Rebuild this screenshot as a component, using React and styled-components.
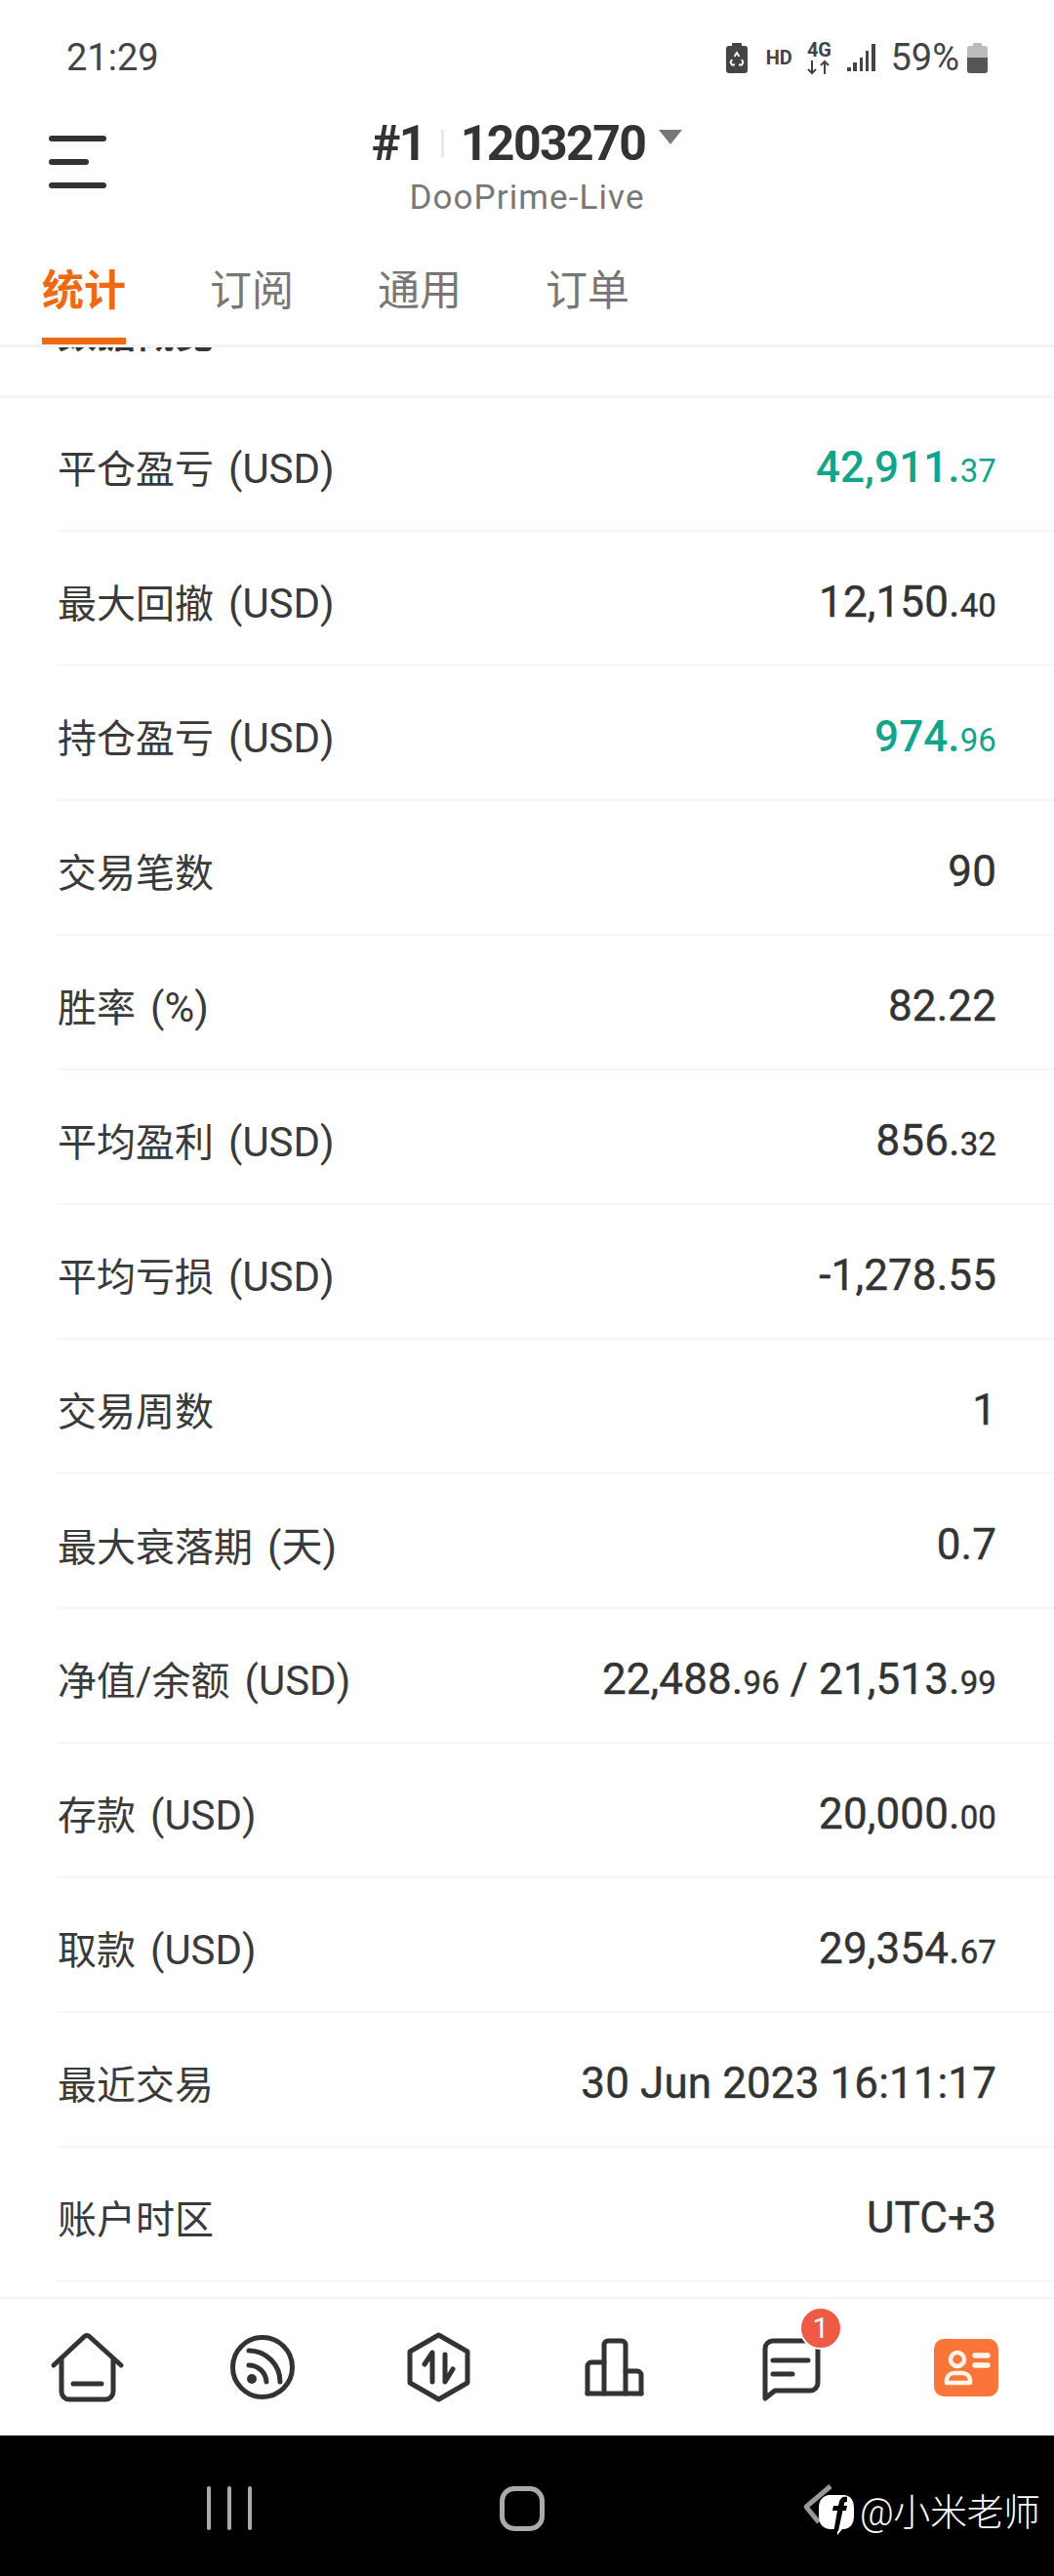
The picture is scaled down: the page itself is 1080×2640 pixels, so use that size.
import React from "react";
import styled, { createGlobalStyle } from "styled-components";

const Global = createGlobalStyle`
  html, body { margin: 0; padding: 0; background: #fff; }
  * { box-sizing: border-box; }
  body { font-family: Roboto, "Noto Sans CJK SC", sans-serif; }
`;

const Page = styled.div`
  width: 1080px;
  height: 2640px;
  display: flex;
  flex-direction: column;
  background: #fff;
  color: #333;
  overflow: hidden;
`;

const StatusBar = styled.div`
  height: 118px;
  flex: none;
  padding: 0 68px;
  display: flex;
  align-items: center;
  justify-content: space-between;
  color: #444;
`;
const Clock = styled.span`
  font-size: 38px;
  line-height: 1;
`;
const StatusGroup = styled.div`
  display: flex;
  align-items: center;
  height: 40px;
`;
const StatusTag = styled.span`
  font-size: 20px;
  font-weight: 700;
  line-height: 1;
  margin-left: ${(p) => p.$left || 0}px;
  letter-spacing: -0.2px;
`;
const NetStack = styled.div`
  display: flex;
  flex-direction: column;
  align-items: center;
  margin-left: 15px;
  width: 26px;
`;
const Percent = styled.span`
  font-size: 38px;
  line-height: 1;
  margin: 0 8px 0 15px;
`;
const StatusSvg = styled.svg`
  display: block;
  flex: none;
  margin-left: ${(p) => p.$left || 0}px;
`;

const TitleBar = styled.div`
  height: 132px;
  flex: none;
  display: grid;
  grid-template-columns: 1fr auto 1fr;
  padding: 0 50px;
`;
const Menu = styled.div`
  display: flex;
  flex-direction: column;
  gap: 18px;
  padding-top: 21px;
`;
const MenuLine = styled.span`
  display: block;
  height: 6px;
  width: ${(p) => p.$w}px;
  border-radius: 3px;
  background: #333;
`;
const TitleCol = styled.div`
  display: flex;
  flex-direction: column;
  align-items: center;
`;
const TitleRow = styled.div`
  display: flex;
  align-items: center;
  height: 58px;
  font-size: 50px;
  font-weight: 700;
  letter-spacing: -1.6px;
  color: #333;
`;
const TitleDivider = styled.span`
  width: 3px;
  height: 28px;
  background: #e8e8e8;
  margin: 0 17px 0 16px;
`;
const Caret = styled.span`
  width: 0;
  height: 0;
  border-left: 12px solid transparent;
  border-right: 12px solid transparent;
  border-top: 15px solid #777;
  margin: 0 0 14px 14px;
`;
const SubTitle = styled.div`
  font-size: 35px;
  line-height: 40px;
  margin-top: 7px;
  letter-spacing: 1.1px;
  color: #777;
`;

const Tabs = styled.div`
  height: 106px;
  flex: none;
  padding: 0 0 0 43px;
  display: flex;
  gap: 86px;
  border-bottom: 3px solid #f3f3f3;
  position: relative;
  z-index: 1;
  background: #fff;
`;
const Tab = styled.div`
  position: relative;
  height: 106px;
  font-size: 43px;
  line-height: 60px;
  padding-top: 18px;
  white-space: nowrap;
  font-weight: ${(p) => (p.$active ? 700 : 400)};
  color: ${(p) => (p.$active ? "#ee6a12" : "#777")};
  ${(p) =>
    p.$active &&
    `&::after{content:"";position:absolute;left:0;right:0;bottom:3px;height:7px;background:#ee6a12;}`}
`;

const Content = styled.div`
  flex: 1;
  min-height: 0;
  overflow: hidden;
`;
const SectionHead = styled.div`
  display: flow-root;
  height: 52px;
  border-bottom: 3px solid #f4f4f4;
  padding-left: 59px;
`;
const SectionTitle = styled.div`
  margin-top: -35px;
  font-size: 40px;
  line-height: 44px;
  font-weight: 700;
  color: #333;
`;
const RowList = styled.div`
  display: flex;
  flex-direction: column;
`;
const Row = styled.div`
  flex: none;
  height: 138px;
  margin-left: 59px;
  padding: 5px 59px 0 0;
  display: flex;
  align-items: center;
  justify-content: space-between;
  border-bottom: 2px solid #f5f5f5;
  &:first-child {
    height: 137px;
    padding-top: 4px;
  }
`;
const Label = styled.span`
  font-size: 40px;
  color: #3a3a3a;
`;
const Unit = styled.span`
  font-size: 42px;
  margin-left: 15px;
`;
const Value = styled.span`
  padding-top: 2px;
  font-size: 44px;
  font-weight: ${(p) => (p.$green ? 500 : 400)};
  letter-spacing: 0.1px;
  -webkit-text-stroke: ${(p) => (p.$green ? "0" : "0.4px")};
  color: ${(p) => (p.$green ? "#14a38b" : "#333")};
`;
const Cents = styled.span`
  font-size: 33px;
  font-weight: 400;
`;

const BottomNav = styled.nav`
  height: 142px;
  flex: none;
  display: grid;
  grid-template-columns: repeat(6, 1fr);
  align-items: center;
  justify-items: center;
  border-top: 2px solid #f3f3f3;
  background: #fff;
`;
const NavItem = styled.div`
  position: relative;
  width: 80px;
  height: 80px;
`;
const NavSvg = styled.svg`
  display: block;
  fill: none;
  stroke: #333;
  stroke-width: 5;
  stroke-linecap: round;
  stroke-linejoin: round;
`;
const Badge = styled.span`
  position: absolute;
  left: 49px;
  top: -22px;
  width: 44px;
  height: 44px;
  border-radius: 50%;
  border: 2px solid #fff;
  background: #ef5a45;
  color: #fff;
  font-size: 30px;
  line-height: 40px;
  text-align: center;
`;

const SystemBar = styled.div`
  position: relative;
  height: 144px;
  flex: none;
  background: #000;
  display: flex;
  align-items: flex-start;
  padding: 52px 0 0 212px;
`;
const Recents = styled.div`
  display: flex;
  gap: 17px;
`;
const RecentBar = styled.span`
  display: block;
  width: 4px;
  height: 45px;
  background: #aaa;
  border-radius: 2px;
`;
const HomeKey = styled.span`
  display: block;
  width: 46px;
  height: 46px;
  margin-left: 254px;
  border: 5px solid #aaa;
  border-radius: 15px;
`;
const Watermark = styled.div`
  position: absolute;
  left: 824px;
  top: 50px;
  display: flex;
  align-items: center;
`;
const WatermarkText = styled.span`
  position: absolute;
  left: 57px;
  top: 4px;
  white-space: nowrap;
  font-size: 38px;
  line-height: 50px;
  letter-spacing: -0.4px;
  color: #fff;
  font-weight: 300;
`;

const rows = [
  ["平仓盈亏", "(USD)", [["42,911.", "37"]], true],
  ["最大回撤", "(USD)", [["12,150.", "40"]]],
  ["持仓盈亏", "(USD)", [["974.", "96"]], true],
  ["交易笔数", "", [["90"]]],
  ["胜率", "(%)", [["82.22"]]],
  ["平均盈利", "(USD)", [["856.", "32"]]],
  ["平均亏损", "(USD)", [["-1,278.55"]]],
  ["交易周数", "", [["1"]]],
  ["最大衰落期", "(天)", [["0.7"]]],
  ["净值/余额", "(USD)", [["22,488.", "96"], [" / 21,513.", "99"]]],
  ["存款", "(USD)", [["20,000.", "00"]]],
  ["取款", "(USD)", [["29,354.", "67"]]],
  ["最近交易", "", [["30 Jun 2023 16:11:17"]]],
  ["账户时区", "", [["UTC+3"]]],
];

const Icon = ({ children }) => (
  <NavSvg width="80" height="80" viewBox="0 0 80 80">
    {children}
  </NavSvg>
);

export default function App() {
  return (
    <Page>
      <Global />
      <StatusBar>
        <Clock>21:29</Clock>
        <StatusGroup>
          <StatusSvg width="22" height="31" viewBox="0 0 22 31">
            <rect x="6" y="0" width="10" height="4" rx="1" fill="#444" />
            <rect x="0" y="3" width="22" height="28" rx="3" fill="#444" />
            <path d="M8.5 14L11 10l2.5 4M16 17l1.5 3-1.5 2.5h-3M9 22.5H6L4.5 20 6 17" fill="none" stroke="#fff" strokeWidth="1.8" />
          </StatusSvg>
          <StatusTag $left={19}>HD</StatusTag>
          <NetStack>
            <StatusTag>4G</StatusTag>
            <StatusSvg width="26" height="16" viewBox="0 0 26 16">
              <path d="M6 1v13M2 10l4 4 4-4M19 15V2M15 6l4-4 4 4" fill="none" stroke="#444" strokeWidth="2" />
            </StatusSvg>
          </NetStack>
          <StatusSvg $left={16} width="29" height="28" viewBox="0 0 29 28">
            <rect x="0" y="24" width="4" height="4" fill="#444" />
            <rect x="6" y="19" width="4" height="9" fill="#444" />
            <rect x="13" y="14" width="3" height="14" fill="#444" />
            <rect x="19" y="7" width="3" height="21" fill="#444" />
            <rect x="25" y="0" width="4" height="28" fill="#444" />
          </StatusSvg>
          <Percent>59%</Percent>
          <StatusSvg width="21" height="31" viewBox="0 0 21 31">
            <rect x="6" y="0" width="9" height="4" rx="1" fill="#bbb" />
            <path d="M3 3h15a3 3 0 0 1 3 3v10H0V6a3 3 0 0 1 3-3z" fill="#bbb" />
            <path d="M0 15h21v13a3 3 0 0 1-3 3H3a3 3 0 0 1-3-3z" fill="#555" />
          </StatusSvg>
        </StatusGroup>
      </StatusBar>

      <TitleBar>
        <Menu>
          <MenuLine $w={59} />
          <MenuLine $w={41} />
          <MenuLine $w={59} />
        </Menu>
        <TitleCol>
          <TitleRow>
            #1
            <TitleDivider />
            1203270
            <Caret />
          </TitleRow>
          <SubTitle>DooPrime-Live</SubTitle>
        </TitleCol>
        <span />
      </TitleBar>

      <Tabs>
        <Tab $active>统计</Tab>
        <Tab>订阅</Tab>
        <Tab>通用</Tab>
        <Tab>订单</Tab>
      </Tabs>

      <Content>
        <SectionHead>
          <SectionTitle>数据概览</SectionTitle>
        </SectionHead>
        <RowList>
          {rows.map(([label, unit, parts, green]) => (
            <Row key={label}>
              <Label>
                {label}
                {unit && <Unit>{unit}</Unit>}
              </Label>
              <Value $green={green}>
                {parts.map(([main, cents], i) => (
                  <React.Fragment key={i}>
                    {main}
                    {cents && <Cents>{cents}</Cents>}
                  </React.Fragment>
                ))}
              </Value>
            </Row>
          ))}
        </RowList>
      </Content>

      <BottomNav>
        <NavItem>
          <Icon>
            <path d="M5 38L36.5 8.5a3.5 3.5 0 0 1 5 0L74 38" />
            <path d="M13 32V65a8 8 0 0 0 8 8H58a8 8 0 0 0 8-8V32" />
            <path d="M25 57H54" />
          </Icon>
        </NavItem>
        <NavItem>
          <Icon>
            <circle cx="39" cy="40" r="30.5" />
            <path d="M25 23A32 32 0 0 1 57 55" />
            <path d="M25 38A18 18 0 0 1 43 55" />
            <circle cx="28" cy="52" r="5" fill="#333" stroke="none" />
          </Icon>
        </NavItem>
        <NavItem>
          <Icon>
            <path d="M39.5 7L69 24V56L39.5 73L10 56V24Z" />
            <path d="M33 55V25L25 37" />
            <path d="M46 27V55L54 42" />
          </Icon>
        </NavItem>
        <NavItem>
          <Icon>
            <path d="M12 67V39a4 4 0 0 1 4-4H29" />
            <path d="M29 67V17a4 4 0 0 1 4-4h14a4 4 0 0 1 4 4V67" />
            <path d="M51 44H63a4 4 0 0 1 4 4V67" />
            <path d="M12 67H67" />
          </Icon>
        </NavItem>
        <NavItem>
          <Icon>
            <path d="M14 70V21a8 8 0 0 1 8-8H60a8 8 0 0 1 8 8V56a8 8 0 0 1-8 8H24L14 72Z" />
            <path d="M22 33H58" />
            <path d="M22 47H42" />
          </Icon>
          <Badge>1</Badge>
        </NavItem>
        <NavItem>
          <NavSvg width="80" height="80" viewBox="0 0 80 80">
            <rect x="7" y="11" width="66" height="59" rx="10" fill="#fb7538" stroke="none" />
            <g stroke="#fff4e8" strokeWidth="4.5">
              <circle cx="31" cy="32" r="7" />
              <path d="M20 56V53a8 8 0 0 1 8-7h8a8 8 0 0 1 8 7v3Z" />
              <path d="M49 28H62" strokeWidth="5.5" />
              <path d="M49 38H62" strokeWidth="5.5" />
            </g>
          </NavSvg>
        </NavItem>
      </BottomNav>

      <SystemBar>
        <Recents>
          <RecentBar />
          <RecentBar />
          <RecentBar />
        </Recents>
        <HomeKey />
        <Watermark>
          <svg width="54" height="56" viewBox="0 0 54 56">
            <path d="M27 2L2 23L15 39" fill="none" stroke="#999" strokeWidth="5" />
            <path d="M26 11H40C47 11 51 16 51 24V33C51 40 47 46 40 46H39L34 52V46H27C20 46 15 41 15 33V24C15 16 20 11 26 11Z" fill="#fff" />
            <path d="M30 50L34 27H29L30 22H35L36 18C37 14 40 12 44 13V18C41 18 41 19 41 21L40.5 22H44L43 27H39.5L35 48Z" fill="#000" />
          </svg>
          <WatermarkText>@小米老师</WatermarkText>
        </Watermark>
      </SystemBar>
    </Page>
  );
}
